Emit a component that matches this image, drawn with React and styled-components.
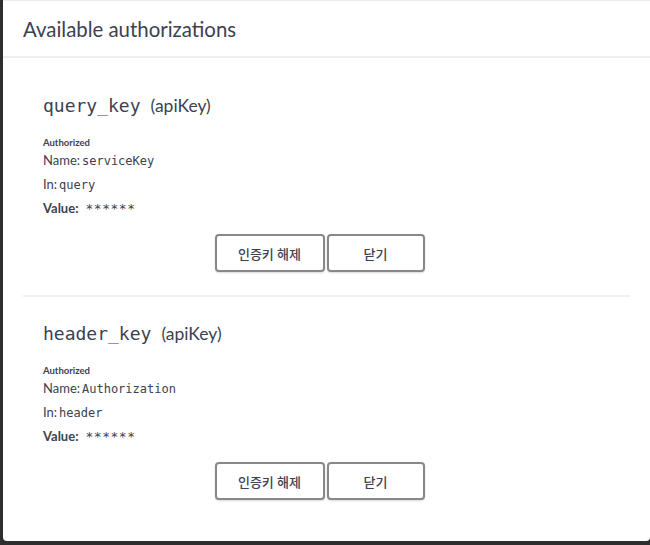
import React from 'react';
import styled, { createGlobalStyle } from 'styled-components';

const GlobalStyle = createGlobalStyle`
  html, body {
    margin: 0;
    padding: 0;
    background: #2e2e2e;
    height: 545px;
    overflow: hidden;
  }
`;

const auths = [
  { key: 'query_key', name: 'serviceKey', where: 'query' },
  { key: 'header_key', name: 'Authorization', where: 'header' },
];

const sans = `Lato, "Noto Sans CJK KR", sans-serif`;
const mono = `"DejaVu Sans Mono", monospace`;

const Backdrop = styled.div`
  padding-left: 3px;
  height: 545px;
`;

const Modal = styled.div`
  background: #fff;
  height: 541px;
  border-top: 1px solid #ebebeb;
  border-radius: 0 0 4px 4px;
  box-sizing: border-box;
  color: #3b4151;
`;

const Header = styled.div`
  display: flex;
  align-items: center;
  padding: 0 20px;
  border-bottom: 2px solid #efefef;
  box-sizing: border-box;
  height: 57px;
`;

const Title = styled.h3`
  margin: 0;
  font-family: ${sans};
  font-size: 20.4px;
  font-weight: 400;
  color: #3b4151;
  padding-top: 1px;
`;

const Content = styled.div`
  padding: 11px 20px 0;
`;

const Section = styled.div`
  padding: 10px 20px;
  border-bottom: ${(p) => (p.$last ? 'none' : '2px solid #f0f0f0')};
`;

const KeyTitle = styled.h4`
  margin: 15px 0 18px;
  line-height: 24px;
  font-weight: 400;
  display: flex;
  align-items: baseline;
  gap: 10px;
`;

const Code = styled.code`
  font-family: ${mono};
  font-size: 18px;
`;

const KeyType = styled.span`
  font-family: ${sans};
  font-size: 17.5px;
  font-weight: 400;
`;

const Status = styled.div`
  font-family: ${sans};
  font-size: 9.5px;
  font-weight: 700;
  line-height: 14px;
  margin-bottom: 1px;
`;

const Row = styled.div`
  display: flex;
  align-items: baseline;
  line-height: 18px;
  margin-top: ${(p) => (p.$first ? '0' : '5px')};
  font-family: ${sans};
  font-size: 13px;
`;

const Label = styled.span`
  font-weight: ${(p) => (p.$bold ? 700 : 400)};
  margin-right: ${(p) => (p.$bold ? '7px' : '2px')};
`;

const Mono = styled.span`
  font-family: ${mono};
  font-size: 12px;
`;

const Stars = styled(Mono)`
  font-size: 13px;
  letter-spacing: 0.5px;
`;

const ButtonRow = styled.div`
  display: flex;
  justify-content: center;
  gap: 2px;
  padding: 16px 0 13px;
`;

const Button = styled.button`
  width: ${(p) => p.$w}px;
  height: 38px;
  margin-right: ${(p) => (p.$done ? '14px' : '0')};
  background: #fff;
  border: 2px solid #888;
  border-radius: 4px;
  box-shadow: 0 1px 2px rgba(0, 0, 0, 0.15);
  font-family: ${sans};
  font-size: 13px;
  font-weight: 500;
  color: #3b4151;
  padding: 0;
  cursor: pointer;
`;

const AuthBlock = ({ item, last }) => (
  <Section $last={last}>
    <KeyTitle>
      <Code>{item.key}</Code>
      <KeyType>(apiKey)</KeyType>
    </KeyTitle>
    <Status>Authorized</Status>
    <Row $first>
      <Label>Name:</Label>
      <Mono>{item.name}</Mono>
    </Row>
    <Row>
      <Label>In:</Label>
      <Mono>{item.where}</Mono>
    </Row>
    <Row>
      <Label $bold>Value:</Label>
      <Stars>******</Stars>
    </Row>
    <ButtonRow>
      <Button $w={110}>인증키 해제</Button>
      <Button $w={98} $done>
        닫기
      </Button>
    </ButtonRow>
  </Section>
);

export default function App() {
  return (
    <>
      <GlobalStyle />
      <Backdrop>
        <Modal>
          <Header>
            <Title>Available authorizations</Title>
          </Header>
          <Content>
            {auths.map((a, i) => (
              <AuthBlock key={a.key} item={a} last={i === auths.length - 1} />
            ))}
          </Content>
        </Modal>
      </Backdrop>
    </>
  );
}
